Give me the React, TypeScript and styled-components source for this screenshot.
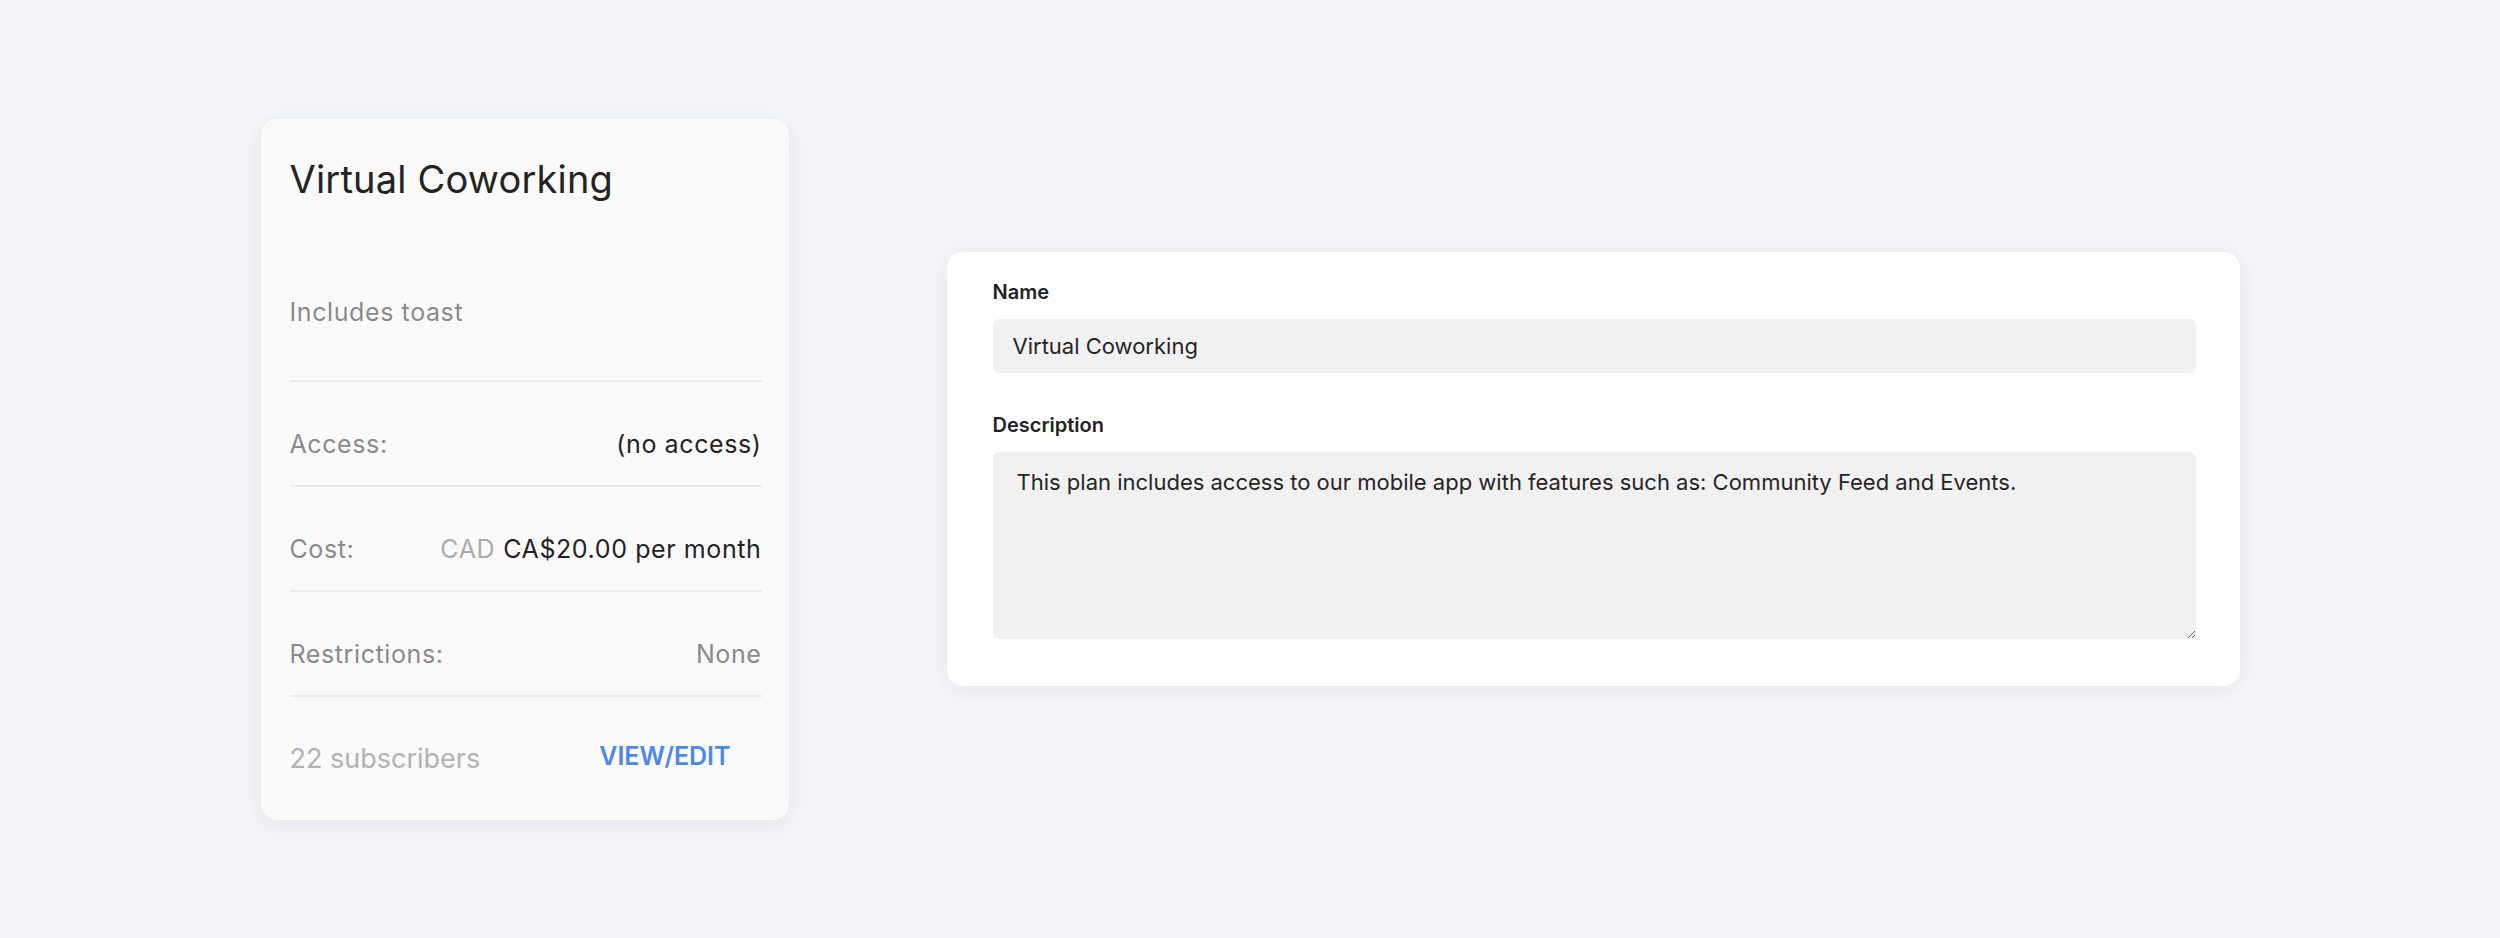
import React from "react";
import styled, { createGlobalStyle } from "styled-components";

const Global = createGlobalStyle`
  html, body { margin: 0; padding: 0; }
  body {
    background: #f4f5f8;
    font-family: Inter, "Liberation Sans", sans-serif;
    -webkit-font-smoothing: antialiased;
  }
`;

const Page = styled.div`
  min-height: 938px;
  display: flex;
  align-items: center;
  justify-content: center;
  gap: 158px;
`;

const PlanCard = styled.section`
  width: 528px;
  box-sizing: border-box;
  padding: 38px 27px 43px 29px;
  background: #fafafa;
  border-radius: 16px;
  box-shadow: 0 4px 22px rgba(30, 40, 60, 0.08);
  display: flex;
  flex-direction: column;
`;

const PlanTitle = styled.h2`
  margin: 0;
  font-size: 38px;
  line-height: 44px;
  font-weight: 400;
  letter-spacing: 0.2px;
  color: #232323;
`;

const PlanBlurb = styled.p`
  margin: 96px 0 0;
  padding-bottom: 53px;
  border-bottom: 2px solid #ececec;
  font-size: 25px;
  line-height: 30px;
  letter-spacing: 0.6px;
  color: #8a8a8a;
`;

const InfoRow = styled.div`
  display: flex;
  justify-content: space-between;
  align-items: baseline;
  padding: 47px 0 26px;
  border-bottom: 2px solid #ececec;
  font-size: 25px;
  line-height: 30px;
  letter-spacing: 0.6px;
`;

const RowLabel = styled.span`
  color: #8a8a8a;
`;

const RowValue = styled.span<{ $muted?: boolean }>`
  color: ${(p) => (p.$muted ? "#8a8a8a" : "#232323")};
`;

const Currency = styled.span`
  color: #ababab;
  margin-right: 8px;
`;

const CardFooter = styled.div`
  display: flex;
  justify-content: space-between;
  align-items: center;
  padding-top: 44px;
`;

const Subscribers = styled.span`
  font-size: 27px;
  line-height: 34px;
  color: #b2b2b2;
`;

const LinkButton = styled.button`
  border: 0;
  background: none;
  padding: 0 31px 6px 0;
  font-family: inherit;
  font-size: 25px;
  line-height: 30px;
  font-weight: 600;
  color: #4c86ef;
  cursor: pointer;
`;

const FormCard = styled.section`
  width: 1293px;
  box-sizing: border-box;
  padding: 28px 44px 47px 46px;
  background: #ffffff;
  border-radius: 16px;
  box-shadow: 0 4px 22px rgba(30, 40, 60, 0.07);
  display: flex;
  flex-direction: column;
`;

const FieldLabel = styled.label<{ $gap?: number }>`
  display: block;
  margin-top: ${(p) => p.$gap ?? 0}px;
  margin-bottom: 15px;
  font-size: 20px;
  line-height: 24px;
  font-weight: 600;
  color: #222;
`;

const TextInput = styled.input`
  box-sizing: border-box;
  width: 100%;
  height: 54px;
  border: 0;
  border-radius: 6px;
  background: #f1f1f1;
  padding: 0 20px;
  font-family: inherit;
  font-size: 22px;
  color: #252525;
  outline: none;
`;

const TextArea = styled.textarea`
  box-sizing: border-box;
  width: 100%;
  height: 187px;
  border: 0;
  border-radius: 6px;
  background: #f1f1f1;
  padding: 15px 24px;
  font-family: inherit;
  font-size: 22px;
  line-height: 30px;
  color: #252525;
  outline: none;
  resize: vertical;
`;

export default function App() {
  return (
    <>
      <Global />
      <Page>
        <PlanCard>
          <PlanTitle>Virtual Coworking</PlanTitle>
          <PlanBlurb>Includes toast</PlanBlurb>
          <InfoRow>
            <RowLabel>Access:</RowLabel>
            <RowValue>(no access)</RowValue>
          </InfoRow>
          <InfoRow>
            <RowLabel>Cost:</RowLabel>
            <RowValue>
              <Currency>CAD</Currency>CA$20.00 per month
            </RowValue>
          </InfoRow>
          <InfoRow>
            <RowLabel>Restrictions:</RowLabel>
            <RowValue $muted>None</RowValue>
          </InfoRow>
          <CardFooter>
            <Subscribers>22 subscribers</Subscribers>
            <LinkButton>VIEW/EDIT</LinkButton>
          </CardFooter>
        </PlanCard>
        <FormCard>
          <FieldLabel htmlFor="plan-name">Name</FieldLabel>
          <TextInput id="plan-name" readOnly defaultValue="Virtual Coworking" />
          <FieldLabel htmlFor="plan-desc" $gap={40}>
            Description
          </FieldLabel>
          <TextArea
            id="plan-desc"
            readOnly
            defaultValue="This plan includes access to our mobile app with features such as: Community Feed and Events."
          />
        </FormCard>
      </Page>
    </>
  );
}
